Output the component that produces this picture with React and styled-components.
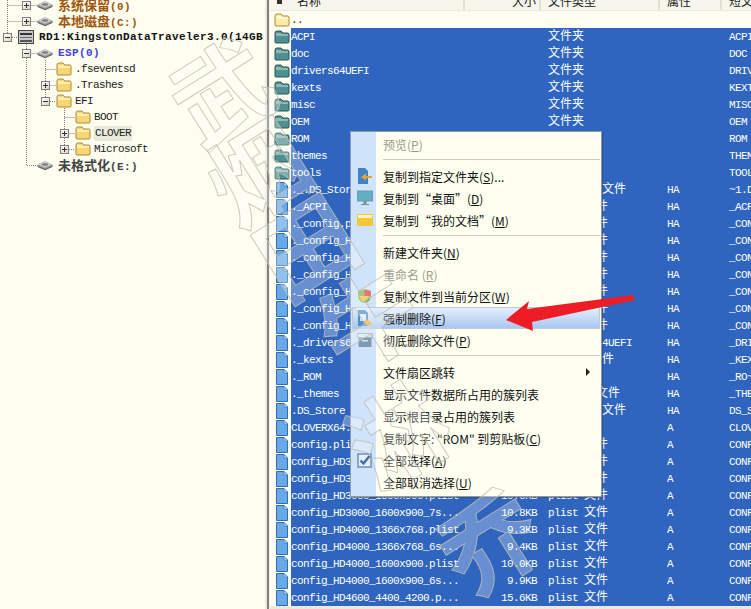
import React from "react";
import styled, { createGlobalStyle } from "styled-components";

const MONO = `"Liberation Mono", "Noto Sans CJK SC", monospace`;
const HAN = `"Noto Sans CJK SC", "Liberation Sans", sans-serif`;

const GlobalStyle = createGlobalStyle`
  html, body {
    margin: 0;
    padding: 0;
    background: #fdfdf0;
  }
  * {
    box-sizing: border-box;
  }
`;

const tree = [
  { depth: 1, toggle: "plus", icon: "disk", text: "系统保留(0)", tone: "brown", cut: true },
  { depth: 1, toggle: "plus", icon: "disk", text: "本地磁盘(C:)", tone: "brown" },
  { depth: 0, toggle: "minus", icon: "drive", text: "RD1:KingstonDataTraveler3.0(14GB", tone: "black" },
  { depth: 1, toggle: "minus", icon: "disk", text: "ESP(0)", tone: "blue" },
  { depth: 2, icon: "folder", text: ".fseventsd" },
  { depth: 2, toggle: "plus", icon: "folder", text: ".Trashes" },
  { depth: 2, toggle: "minus", icon: "folder", text: "EFI" },
  { depth: 3, icon: "folder", text: "BOOT" },
  { depth: 3, toggle: "plus", icon: "folder", text: "CLOVER", active: true },
  { depth: 3, toggle: "plus", icon: "folder", text: "Microsoft" },
  { depth: 1, icon: "disk", text: "未格式化(E:)", tone: "gray" },
];

const folders = [
  ["ACPI", "ACPI"],
  ["doc", "DOC"],
  ["drivers64UEFI", "DRIVER~1"],
  ["kexts", "KEXTS"],
  ["misc", "MISC"],
  ["OEM", "OEM"],
  ["ROM", "ROM"],
  ["themes", "THEMES"],
  ["tools", "TOOLS"],
];

const files = [
  ["._.DS_Store", "", "DS_STORE 文件", "HA", "~1.DS"],
  ["._ACPI", "", "_ACPI 文件", "HA", "_ACPI~1"],
  ["._config.plist", "", "plist 文件", "HA", "_CONFI~1"],
  ["._config_HD3000.plist", "", "plist 文件", "HA", "_CONFI~2"],
  ["._config_HD3000.plist", "", "plist 文件", "HA", "_CONFI~3"],
  ["._config_HD3000.plist", "", "plist 文件", "HA", "_CONFI~4"],
  ["._config_HD4000.plist", "", "plist 文件", "HA", "_CONFI~5"],
  ["._config_HD4000.plist", "", "plist 文件", "HA", "_CONFI~6"],
  ["._config_HD4000.plist", "", "plist 文件", "HA", "_CONFI~7"],
  ["._drivers64UEFI", "", "_drivers64UEFI", "HA", "_DRIVE~1"],
  ["._kexts", "", "_kexts 文件", "HA", "_KEXTS~1"],
  ["._ROM", "", "_ROM 文件", "HA", "_RO~1"],
  ["._themes", "", "_themes 文件", "HA", "_THEME~1"],
  [".DS_Store", "", "DS_Store 文件", "HA", "DS_STORE"],
  ["CLOVERX64.efi", "", "efi 文件", "A", "CLOVER~1"],
  ["config.plist", "", "plist 文件", "A", "CONFIG~1"],
  ["config_HD3000.plist", "", "plist 文件", "A", "CONFIG~2"],
  ["config_HD3000.plist", "", "plist 文件", "A", "CONFIG~3"],
  ["config_HD3000_1600x900.plist", "10.6KB", "plist 文件", "A", "CONFIG~4"],
  ["config_HD3000_1600x900_7s...", "10.8KB", "plist 文件", "A", "CONFIG~5"],
  ["config_HD4000_1366x768.plist", "9.3KB", "plist 文件", "A", "CONFIG~6"],
  ["config_HD4000_1366x768_6s...", "9.4KB", "plist 文件", "A", "CONFIG~7"],
  ["config_HD4000_1600x900.plist", "10.0KB", "plist 文件", "A", "CONFIG~8"],
  ["config_HD4000_1600x900_6s...", "9.9KB", "plist 文件", "A", "CONFIG~9"],
  ["config_HD4600_4400_4200.p...", "15.6KB", "plist 文件", "A", "CONFI~10"],
];

const menu = [
  { label: "预览", key: "P", disabled: true },
  { line: true },
  { label: "复制到指定文件夹", key: "S", tail: "...", icon: "copy" },
  { label: "复制到“桌面”", key: "D", icon: "monitor" },
  { label: "复制到“我的文档”", key: "M", icon: "docs" },
  { line: true },
  { label: "新建文件夹", key: "N" },
  { label: "重命名 ", key: "R", disabled: true },
  { label: "复制文件到当前分区", key: "W", icon: "shield" },
  { label: "强制删除", key: "F", icon: "erase", active: true },
  { label: "彻底删除文件", key: "P", icon: "box" },
  { line: true },
  { label: "文件扇区跳转", more: true },
  { label: "显示文件数据所占用的簇列表" },
  { label: "显示根目录占用的簇列表" },
  { label: "复制文字: \"ROM\" 到剪贴板", key: "C" },
  { label: "全部选择", key: "A", icon: "check" },
  { label: "全部取消选择", key: "U" },
];

const marks = [
  { char: "武", x: 219, y: 87 },
  { char: "烟", x: 255, y: 167 },
  { char: "田", x: 303, y: 242 },
  { char: "牛", x: 365, y: 315 },
  { char: "淋", x: 395, y: 430 },
  { char: "乔", x: 487, y: 537 },
];

// ascii is 6px wide like the old bitmap font, han text needs its own size
function mixed(text, size = 12) {
  return text.split(/([\u4e00-\u9fff]+)/).map((part, i) =>
    /[\u4e00-\u9fff]/.test(part) ? (
      <Han key={i} $size={size}>
        {part}
      </Han>
    ) : (
      part
    )
  );
}

function DiskIcon() {
  return (
    <svg width="17" height="11" viewBox="0 0 17 11">
      <path d="M0.5 4.5 L8.5 1 L16.5 4.5 L16.5 6.5 L8.5 10 L0.5 6.5 Z" fill="#8f8f8f" />
      <path d="M0.5 4.5 L8.5 1 L16.5 4.5 L8.5 8 Z" fill="#cfcfcf" />
      <ellipse cx="8.5" cy="4.5" rx="3.5" ry="1.3" fill="#808080" />
      <path d="M0.5 6.5 L8.5 10 L16.5 6.5" fill="none" stroke="#5c5c5c" />
    </svg>
  );
}

function DriveIcon() {
  return (
    <svg width="16" height="14" viewBox="0 0 16 14">
      <rect x="0.5" y="0.5" width="15" height="13" fill="#c8c8c8" stroke="#444" />
      <rect x="2" y="3" width="12" height="2" fill="#333" />
      <rect x="2" y="7" width="12" height="1" fill="#666" />
      <rect x="2" y="10" width="12" height="2" fill="#555" />
    </svg>
  );
}

function FolderIcon({ teal, pale }) {
  const body = teal ? "#4f9092" : pale ? "#fde9a8" : "#f7d774";
  const top = teal ? "#8fb8b0" : pale ? "#fff3c8" : "#fdeeb0";
  const edge = teal ? "#2d5560" : "#b08a3a";
  return (
    <svg width="16" height="14" viewBox="0 0 16 14">
      <path d="M1 3 Q1 1 3 1 L7 1 L9 3 L14 3 Q15 3 15 5 L15 12 Q15 13 14 13 L2 13 Q1 13 1 12 Z" fill={body} stroke={edge} />
      <path d="M2 6 L14 6 L14 4 L8 4 L6.5 3 L2 3 Z" fill={top} />
    </svg>
  );
}

function FileIcon() {
  return (
    <svg width="12" height="16" viewBox="0 0 12 16">
      <path d="M0.5 0.5 L8 0.5 L11.5 4 L11.5 15.5 L0.5 15.5 Z" fill="#6aa9e8" stroke="#2f6fb0" />
      <path d="M8 0.5 L8 4 L11.5 4 Z" fill="#cfe4fa" stroke="#2f6fb0" strokeWidth="0.6" />
    </svg>
  );
}

function TreeIcon({ name }) {
  if (name === "disk") return <DiskIcon />;
  if (name === "drive") return <DriveIcon />;
  return <FolderIcon />;
}

function MenuIcon({ name }) {
  switch (name) {
    case "copy":
      return (
        <svg width="16" height="18" viewBox="0 0 16 18">
          <path d="M1 1 L8 1 L11 4 L11 17 L1 17 Z" fill="#3f83c4" />
          <path d="M15 9 L9 9 L9 6.5 L4 10 L9 13.5 L9 11 L15 11 Z" fill="#f0a02e" />
        </svg>
      );
    case "monitor":
      return (
        <svg width="16" height="16" viewBox="0 0 16 16">
          <rect x="0.5" y="1" width="15" height="10" fill="#5fb0c4" stroke="#7b9aa8" />
          <rect x="6.5" y="11" width="3" height="3" fill="#7b8f98" />
          <rect x="4" y="14" width="8" height="1" fill="#7b8f98" />
        </svg>
      );
    case "docs":
      return (
        <svg width="16" height="14" viewBox="0 0 16 14">
          <path d="M0 2 Q0 1 1 1 L15 1 Q16 1 16 2 L16 13 L0 13 Z" fill="#f3c838" />
          <path d="M1 2 L15 2 L15 5 L1 5 Z" fill="#fff4c0" />
        </svg>
      );
    case "shield":
      return (
        <svg width="15" height="16" viewBox="0 0 15 16">
          <path d="M1 3 L8 1 L14 3 L14 9 Q13 14 7.5 15 Q2 14 1 9 Z" fill="#8fae52" />
          <path d="M7.5 1.5 L14 3 L14 8 L7.5 8 Z" fill="#d8423a" />
          <path d="M2 8 L12 8 L9 13 L5 13 Z" fill="#eec04a" />
        </svg>
      );
    case "erase":
      return (
        <svg width="16" height="18" viewBox="0 0 16 18">
          <path d="M1 1 L8 1 L11 4 L11 17 L1 17 Z" fill="#4d8fcc" />
          <rect x="3" y="5" width="6" height="7" fill="#dbe9f6" />
          <path d="M9 10 L15 14 L11 17 L7 14 Z" fill="#f0b030" />
        </svg>
      );
    case "box":
      return (
        <svg width="16" height="15" viewBox="0 0 16 15">
          <rect x="0.5" y="0.5" width="15" height="4" fill="#dfe6ee" stroke="#9fb0c0" />
          <rect x="1.5" y="5" width="13" height="9" fill="#7e9ab4" />
          <rect x="5" y="7" width="6" height="1.5" fill="#d8e2ec" />
        </svg>
      );
    case "check":
      return (
        <svg width="15" height="15" viewBox="0 0 15 15">
          <rect x="1" y="1" width="13" height="13" fill="#e6eef8" stroke="#6f90b8" strokeWidth="1.5" />
          <path d="M3.5 7.5 L6.5 10.5 L12.5 3" fill="none" stroke="#3f6ea8" strokeWidth="2.4" />
        </svg>
      );
    default:
      return null;
  }
}

function TreeRow({ row }) {
  return (
    <Node $depth={row.depth}>
      <ToggleSlot>
        {row.toggle && <Toggle $open={row.toggle === "minus"} />}
      </ToggleSlot>
      <NodeIcon>
        <TreeIcon name={row.icon} />
      </NodeIcon>
      <NodeLabel $tone={row.tone} $active={row.active}>
        {mixed(row.text, row.tone ? 13 : 12)}
      </NodeLabel>
    </Node>
  );
}

function FileRow({ icon, name, size, type, attr, short }) {
  return (
    <Row>
      <RowIcon>{icon}</RowIcon>
      <Cells $selected>
        <NameCell>{name}</NameCell>
        <SizeCell>{size}</SizeCell>
        <Cell>{mixed(type)}</Cell>
        <Cell>{attr}</Cell>
        <Cell>{short}</Cell>
      </Cells>
    </Row>
  );
}

function ContextMenu() {
  return (
    <Menu>
      {menu.map((item, i) =>
        item.line ? (
          <MenuLine key={i} />
        ) : (
          <MenuItem key={i} $active={item.active} $disabled={item.disabled}>
            <MenuGutter>{item.icon && <MenuIcon name={item.icon} />}</MenuGutter>
            <MenuText>
              {item.label}
              {item.key && (
                <>
                  (<u>{item.key}</u>)
                </>
              )}
              {item.tail}
            </MenuText>
            {item.more && <MoreArrow />}
          </MenuItem>
        )
      )}
    </Menu>
  );
}

export default function App() {
  return (
    <>
      <GlobalStyle />
      <Screen>
        <TreePanel>
          <TreeLines width="265" height="180" viewBox="0 0 265 180">
            <g stroke="#808080" strokeDasharray="1 1" fill="none">
              <path d="M7.5 0 V37.5 H18" />
              <path d="M7.5 5.5 H37 M7.5 21.5 H37" />
              <path d="M26.5 44 V165.5 H37" />
              <path d="M26.5 53.5 H37" />
              <path d="M45.5 60 V101.5 H56" />
              <path d="M45.5 69.5 H56 M45.5 85.5 H56" />
              <path d="M64.5 108 V149.5 H75" />
              <path d="M64.5 117.5 H75 M64.5 133.5 H75" />
            </g>
          </TreeLines>
          {tree.map((row, i) => (
            <TreeRow key={i} row={row} />
          ))}
        </TreePanel>
        <Splitter />
        <ListPanel>
          <Header>
            <HeaderIcon />
            <HeaderCell $width={168} $pad={0}>名称</HeaderCell>
            <HeaderCell $width={76} $right>大小</HeaderCell>
            <HeaderCell $width={119}>文件类型</HeaderCell>
            <HeaderCell $width={62}>属性</HeaderCell>
            <HeaderCell $width={60} $plain>短文件名</HeaderCell>
          </Header>
          <Rows>
            <Row>
              <RowIcon>
                <FolderIcon pale />
              </RowIcon>
              <Cells>
                <NameCell $dark>..</NameCell>
              </Cells>
            </Row>
            {folders.map(([name, short]) => (
              <FileRow key={name} icon={<FolderIcon teal />} name={name} type="文件夹" short={short} />
            ))}
            {files.map(([name, size, type, attr, short], i) => (
              <FileRow key={i} icon={<FileIcon />} name={name} size={size} type={type} attr={attr} short={short} />
            ))}
          </Rows>
          <ScrollEdge />
        </ListPanel>
        <ContextMenu />
        {marks.map((mark) => (
          <Mark key={mark.char} $x={mark.x} $y={mark.y}>
            {mark.char}
          </Mark>
        ))}
        <Arrow width="130" height="38" viewBox="0 0 130 38">
          <path d="M0 25 L23 6 L21 14 L127 0 L129 5 L26 27 L27 36 Z" fill="#ee1c25" />
        </Arrow>
      </Screen>
    </>
  );
}

const Screen = styled.div`
  position: relative;
  display: flex;
  width: 751px;
  height: 609px;
  overflow: hidden;
  background: #fdfdf0;
  font-family: ${MONO};
`;

const TreePanel = styled.div`
  position: relative;
  width: 265px;
  flex-shrink: 0;
  margin-top: -3px;
  background: #fdfdf0;
  overflow: hidden;
`;

const TreeLines = styled.svg`
  position: absolute;
  left: 0;
  top: 3px;
`;

const Node = styled.div`
  position: relative;
  display: flex;
  align-items: center;
  height: 16px;
  padding-left: ${(p) => p.$depth * 19}px;
  white-space: nowrap;
`;

const ToggleSlot = styled.div`
  display: flex;
  align-items: center;
  justify-content: center;
  width: 15px;
  flex-shrink: 0;
`;

const Toggle = styled.div`
  position: relative;
  width: 9px;
  height: 9px;
  border: 1px solid #808080;
  background: linear-gradient(135deg, #fff, #d8d4c4);

  &::before {
    content: "";
    position: absolute;
    left: 1px;
    top: 3px;
    width: 5px;
    height: 1px;
    background: #333;
  }
  &::after {
    content: "";
    display: ${(p) => (p.$open ? "none" : "block")};
    position: absolute;
    left: 3px;
    top: 1px;
    width: 1px;
    height: 5px;
    background: #333;
  }
`;

const NodeIcon = styled.div`
  display: flex;
  align-items: center;
  margin-left: 3px;
  width: 16px;
  flex-shrink: 0;
  background: #fdfdf0;
`;

const toneColors = {
  brown: "#a0570c",
  black: "#111",
  blue: "#4343dc",
  gray: "#444",
};

const NodeLabel = styled.div`
  margin-left: ${(p) => (p.$tone ? 5 : 3)}px;
  padding: 0 ${(p) => (p.$active ? 1 : 0)}px;
  height: 15px;
  line-height: 15px;
  font-size: 11px;
  font-weight: ${(p) => (p.$tone ? 700 : 400)};
  letter-spacing: ${(p) => (p.$tone ? "0.4px" : "-0.6px")};
  color: ${(p) => toneColors[p.$tone] || "#222"};
  background: ${(p) => (p.$active ? "#e9e9dc" : "transparent")};
`;

const Han = styled.span`
  font-family: ${HAN};
  font-size: ${(p) => p.$size}px;
  line-height: 1;
  letter-spacing: 0;
`;

const Splitter = styled.div`
  width: 5px;
  flex-shrink: 0;
  background: linear-gradient(90deg, #ecebdd 0 2px, #7f7f7f 2px 4px, #f2f2ea 4px);
`;

const ListPanel = styled.div`
  display: flex;
  flex-direction: column;
  flex: 1;
  min-width: 0;
  background: #fdfdf0;
`;

const Header = styled.div`
  display: flex;
  flex-shrink: 0;
  height: 19px;
  margin-top: -8px;
  background: #f7f6ec;
  border-bottom: 1px solid #eceade;
`;

const HeaderIcon = styled.div`
  width: 27px;
  flex-shrink: 0;
  position: relative;

  &::before {
    content: "";
    position: absolute;
    left: 7px;
    top: 4px;
    width: 5px;
    height: 8px;
    background: #333;
  }
`;

const HeaderCell = styled.div`
  width: ${(p) => p.$width}px;
  flex-shrink: 0;
  padding: 0 ${(p) => (p.$right ? 3 : 7)}px 0 ${(p) => p.$pad ?? 7}px;
  text-align: ${(p) => (p.$right ? "right" : "left")};
  font-family: ${HAN};
  font-size: 12px;
  line-height: 18px;
  color: #222;
  white-space: nowrap;
  overflow: hidden;
  border-right: ${(p) => (p.$plain ? "0" : "2px solid #e2e0d2")};
`;

const Rows = styled.div`
  flex: 1;
  min-height: 0;
`;

const Row = styled.div`
  display: flex;
  height: 17px;
`;

const RowIcon = styled.div`
  display: flex;
  align-items: center;
  justify-content: center;
  width: 21px;
  padding-left: 2px;
  flex-shrink: 0;
`;

const Cells = styled.div`
  flex: 1;
  min-width: 0;
  display: grid;
  grid-template-columns: 174px 76px 119px 62px 1fr;
  align-items: start;
  padding-top: 1px;
  background: ${(p) => (p.$selected ? "#2f65bf" : "transparent")};
  color: #fff;
  font-size: 11px;
  line-height: 16px;
  letter-spacing: -0.6px;
  white-space: nowrap;
  overflow: hidden;
`;

const NameCell = styled.div`
  color: ${(p) => (p.$dark ? "#222" : "inherit")};
`;

const SizeCell = styled.div`
  text-align: right;
  padding-right: 4px;
`;

const Cell = styled.div`
  padding-left: 7px;
`;

const ScrollEdge = styled.div`
  height: 3px;
  flex-shrink: 0;
  background: #ece9dc;
`;

const Menu = styled.div`
  position: absolute;
  left: 350px;
  top: 131px;
  width: 252px;
  height: 366px;
  padding: 1px 1px 3px;
  background: linear-gradient(90deg, #cfe3fb 0 25px, #ffffef 25px);
  border: 1px solid #8f9aa6;
  box-shadow: 1px 1px 1px rgba(60, 60, 60, 0.35);
`;

const MenuItem = styled.div`
  display: flex;
  align-items: center;
  position: relative;
  height: 22px;
  color: ${(p) => (p.$disabled ? "#9c9c90" : "#111")};
  background: ${(p) =>
    p.$active ? "linear-gradient(180deg, #e6f0fc, #a4c6ef)" : "transparent"};
  outline: ${(p) => (p.$active ? "1px solid #b9cade" : "none")};
  outline-offset: -1px;
`;

const MenuGutter = styled.div`
  display: flex;
  align-items: center;
  justify-content: center;
  width: 25px;
  height: 100%;
  flex-shrink: 0;
`;

const MenuText = styled.div`
  margin-left: 6px;
  font-family: "Noto Sans CJK SC", "Liberation Sans", sans-serif;
  font-size: 12px;
  white-space: nowrap;
`;

const MoreArrow = styled.div`
  position: absolute;
  right: 10px;
  top: 7px;
  border-left: 4px solid #222;
  border-top: 4px solid transparent;
  border-bottom: 4px solid transparent;
`;

const MenuLine = styled.div`
  height: 10px;
  margin-left: 31px;
  position: relative;

  &::after {
    content: "";
    position: absolute;
    left: 0;
    right: 0;
    top: 4px;
    height: 1px;
    background: #c9c9bb;
  }
`;

const Mark = styled.div`
  position: absolute;
  left: ${(p) => p.$x - 50}px;
  top: ${(p) => p.$y - 50}px;
  width: 100px;
  height: 100px;
  line-height: 100px;
  text-align: center;
  font-family: ${HAN};
  font-weight: 700;
  font-size: 98px;
  color: rgba(255, 255, 255, 0.28);
  -webkit-text-stroke: 1px rgba(190, 190, 178, 0.8);
  transform: rotate(-32deg);
  pointer-events: none;
`;

const Arrow = styled.svg`
  position: absolute;
  left: 506px;
  top: 295px;
`;
